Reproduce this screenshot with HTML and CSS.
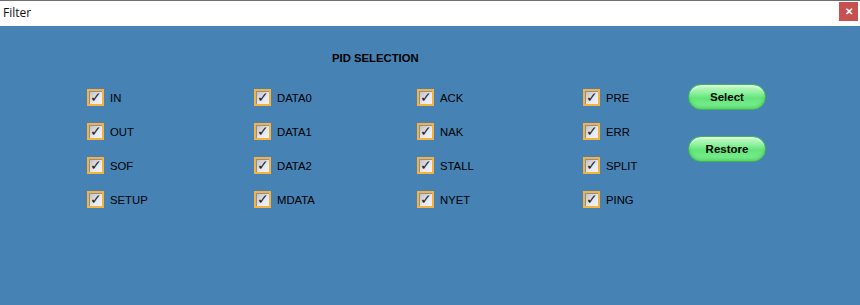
FILE: index.html
```html
<!DOCTYPE HTML>
<html>
	<head>
		<title>Filter</title>
		<meta charset="utf-8">
		<link rel="stylesheet" href="styles.css">
	</head>
	<body>
		<div class="win">
			<div class="titlebar">
				<span class="ttl">Filter</span>
				<span class="close">&#x2715;</span>
			</div>
			<div class="content">
				<h1 class="head">PID SELECTION</h1>
				<div class="main">
					<div class="grid">
						<label class="item"><span class="box">&#x2713;</span>IN</label>
						<label class="item"><span class="box">&#x2713;</span>DATA0</label>
						<label class="item"><span class="box">&#x2713;</span>ACK</label>
						<label class="item"><span class="box">&#x2713;</span>PRE</label>
						<label class="item"><span class="box">&#x2713;</span>OUT</label>
						<label class="item"><span class="box">&#x2713;</span>DATA1</label>
						<label class="item"><span class="box">&#x2713;</span>NAK</label>
						<label class="item"><span class="box">&#x2713;</span>ERR</label>
						<label class="item"><span class="box">&#x2713;</span>SOF</label>
						<label class="item"><span class="box">&#x2713;</span>DATA2</label>
						<label class="item"><span class="box">&#x2713;</span>STALL</label>
						<label class="item"><span class="box">&#x2713;</span>SPLIT</label>
						<label class="item"><span class="box">&#x2713;</span>SETUP</label>
						<label class="item"><span class="box">&#x2713;</span>MDATA</label>
						<label class="item"><span class="box">&#x2713;</span>NYET</label>
						<label class="item"><span class="box">&#x2713;</span>PING</label>
					</div>
					<div class="btns">
						<button class="pill">Select</button>
						<button class="pill">Restore</button>
					</div>
				</div>
			</div>
		</div>
	</body>
</html>
```
FILE: styles.css
```css
*{ margin:0; padding:0; box-sizing:border-box; }
body{ width:860px; height:305px; overflow:hidden; font-family:"Liberation Sans", Arial, sans-serif; background:#4682b4; }
.win{ height:305px; display:flex; flex-direction:column; }
.titlebar{ height:26px; background:#fff; border-top:1px solid #6e6e6e; display:flex; align-items:center; justify-content:space-between; padding:0 2px 1px 3px; }
.ttl{ font-family:"Open Sans", "DejaVu Sans", sans-serif; font-size:12px; color:#111; margin-top:-1px; }
.close{ width:19px; height:19px; background:#c75050; color:#fff; font-size:10px; font-weight:bold; display:flex; align-items:center; justify-content:center; margin-top:-3px; }
.content{ flex:1; background:#4682b4; }
.head{ font-size:11.3px; font-weight:bold; color:#000; margin:25px 0 0 332px; height:14px; line-height:14px; }
.main{ display:flex; margin:24px 0 0 87px; }
.grid{ display:grid; grid-template-columns:167px 163px 166px 105px; grid-auto-rows:34px; }
.item{ display:flex; align-items:flex-start; font-size:11.3px; color:#000; line-height:18px; }
.box{ width:17px; height:17px; border:2px solid #f7b23e; background:linear-gradient(135deg, #b9bcc4, #e8e9ee 60%, #f2f2f5); color:#222; font-size:14px; line-height:13px; text-align:center; margin-right:6px; box-shadow:inset 1px 1px 0 #8c8f98; }
.btns{ display:flex; flex-direction:column; gap:26px; margin-top:-5px; }
.pill{ width:78px; height:26px; border-radius:13px; border:1px solid #3db653; background:linear-gradient(#c4f9cb 0%, #93f2a1 30%, #62e57a 55%, #80f092 100%); font-family:"Liberation Sans", Arial, sans-serif; font-size:11.5px; font-weight:bold; color:#000; box-shadow:inset 0 -2px 3px rgba(50,180,70,0.5), inset 0 2px 1px rgba(255,255,255,0.5); }
```
